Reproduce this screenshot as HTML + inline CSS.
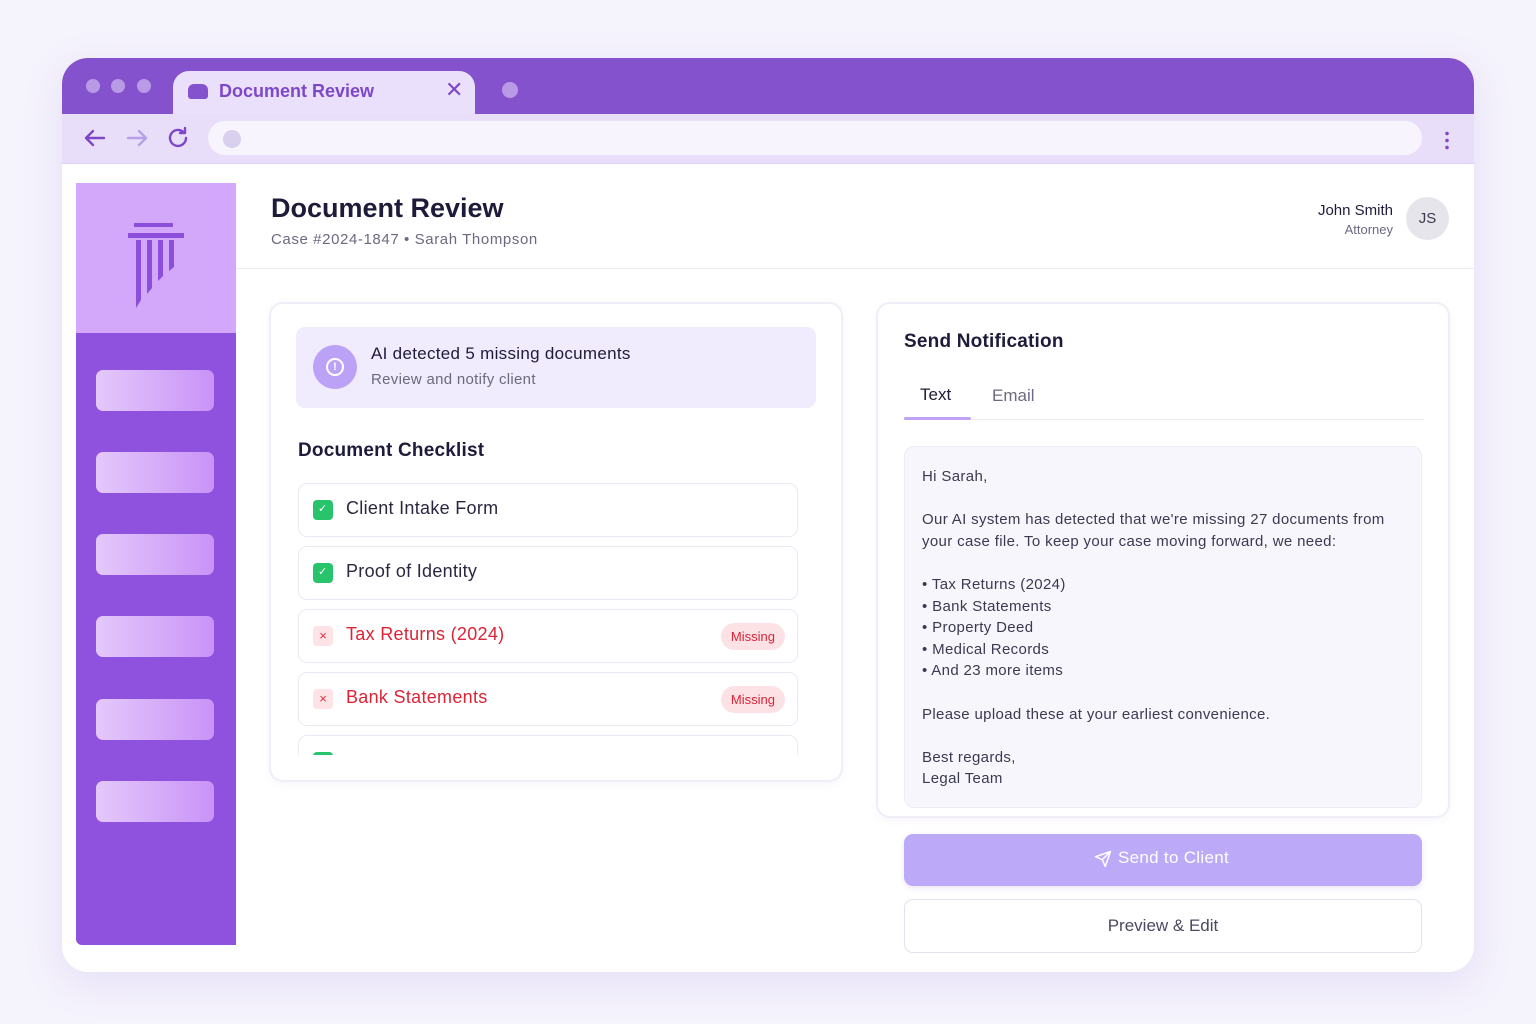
<!DOCTYPE html>
<html><head><meta charset="utf-8"><style>
*{box-sizing:border-box;margin:0;padding:0}
body{width:1536px;height:1024px;background:#f5f3fc;font-family:"Liberation Sans",sans-serif;position:relative;overflow:hidden;color:#1e1b3a}
.a{position:absolute}
.win{left:62px;top:58px;width:1412px;height:914px;border-radius:26px;background:#fff;overflow:hidden;box-shadow:0 10px 40px rgba(140,110,220,.15)}
.bar{left:0;top:0;width:1412px;height:56px;background:#8452cc}
.dot{width:14px;height:14px;border-radius:50%;background:#b99ae6}
.tab{left:111px;top:13px;width:302px;height:50px;background:#ebe0fb;border-radius:16px 16px 0 0}
.nav{left:0;top:56px;width:1412px;height:50px;background:#e9defa;border-bottom:1px solid #ddd0f5}
.url{left:146px;top:63px;width:1214px;height:34px;background:#f7f4fd;border-radius:17px}
.sb{left:14px;top:125px;width:160px;height:762px;background:#8e52df;border-radius:0 0 0 6px}
.sbt{left:0;top:0;width:160px;height:150px;background:#d3a8fa}
.sbb{left:20px;width:118px;height:41px;border-radius:7px;background:linear-gradient(90deg,#e4c8fb,#c993f7)}
.card{background:#fff;border:2px solid #f0edf8;border-radius:14px;box-shadow:0 2px 8px rgba(150,130,210,.08)}
.row{left:236px;width:500px;height:54px;border:1.5px solid #ebe8f3;border-radius:9px;background:#fff}
.ck{left:14px;top:16px;width:20px;height:20px;border-radius:4px;background:#27c46b}
.xk{left:14px;top:16px;width:20px;height:20px;border-radius:4px;background:#fde3e6;color:#e52d3d;font-size:13px;text-align:center;line-height:20px}
.rt{left:47px;top:14px;font-size:18px;color:#2a2840;letter-spacing:.3px}
.miss{right:12px;top:13px;padding:0 10px;height:27px;line-height:27px;border-radius:14px;background:#fde2e5;color:#dc2436;font-size:13px}
.msg{font-size:15px;color:#3b3a50;line-height:21.6px;letter-spacing:.35px}
</style></head><body>
<div class="a win">
 <div class="a bar"></div>
 <div class="a dot" style="left:24px;top:21px"></div><div class="a dot" style="left:49px;top:21px"></div><div class="a dot" style="left:75px;top:21px"></div>
 <div class="a dot" style="left:440px;top:24px;width:16px;height:16px"></div>
 <div class="a tab"></div>
 <div class="a" style="left:126px;top:26px;width:20px;height:15px;background:#8452cc;border-radius:6px 6px 3px 3px"></div>
 <div class="a" style="left:157px;top:23px;font-size:18px;font-weight:bold;color:#7d48c8">Document Review</div>
 <div class="a" style="left:383px;top:19px;font-size:22px;color:#7d48c8">✕</div>
 <div class="a nav"></div>
 <svg class="a" style="left:20px;top:67px" width="110" height="26" viewBox="0 0 110 26"><g fill="none" stroke-width="2.4" stroke-linecap="round" stroke-linejoin="round"><path d="M4 13h18M11 6l-7 7 7 7" stroke="#7d48c8"/><path d="M46 13h18M57 6l7 7-7 7" stroke="#b7a0e4"/><path d="M104 13a8 8 0 1 1-3-6.3M103 3v5h-5" stroke="#7d48c8"/></g></svg>
 <div class="a url"></div>
 <div class="a dot" style="left:161px;top:72px;width:18px;height:18px;background:#d8d0ec"></div>
 <div class="a" style="left:1383px;top:72px;width:4px;height:20px;background:radial-gradient(circle,#7d48c8 1.6px,transparent 2px) 0 0/4px 7px"></div>
 <div class="a sb"><div class="a sbt">
  <div class="a" style="left:58px;top:40px;width:39px;height:4px;background:#8c4fdc"></div>
  <div class="a" style="left:52px;top:50px;width:56px;height:5px;background:#8c4fdc"></div>
  <svg class="a" style="left:55px;top:57px" width="50" height="70"><path d="M5 0h5v60l-5 8zM16 0h5v48l-5 6zM27 0h5v36l-5 5zM38 0h5v27l-5 4z" fill="#8c4fdc"/></svg>
 </div>
  <div class="a sbb" style="top:187px"></div><div class="a sbb" style="top:269px"></div><div class="a sbb" style="top:351px"></div><div class="a sbb" style="top:433px"></div><div class="a sbb" style="top:516px"></div><div class="a sbb" style="top:598px"></div>
 </div>
 <div class="a" style="left:174px;top:210px;width:1238px;height:1px;background:#ece9f3"></div>
 <div class="a" style="left:209px;top:135px;font-size:27px;font-weight:bold;color:#1e1b3a">Document Review</div>
 <div class="a" style="left:209px;top:173px;font-size:15px;color:#6b6a80;letter-spacing:.6px">Case #2024-1847 • Sarah Thompson</div>
 <div class="a" style="left:1200px;top:144px;width:131px;text-align:right;font-size:15px;color:#1e1b3a">John Smith</div>
 <div class="a" style="left:1200px;top:164px;width:131px;text-align:right;font-size:13px;color:#6b6a80">Attorney</div>
 <div class="a" style="left:1344px;top:139px;width:43px;height:43px;border-radius:50%;background:#e6e5ec;text-align:center;line-height:43px;font-size:15px;color:#3b3a50">JS</div>

 <div class="a card" style="left:207px;top:244px;width:574px;height:480px"></div>
 <div class="a" style="left:234px;top:269px;width:520px;height:81px;background:#f0ebfd;border-radius:9px"></div>
 <div class="a" style="left:251px;top:287px;width:44px;height:44px;border-radius:50%;background:#bca2f6"></div>
 <div class="a" style="left:264px;top:300px;width:18px;height:18px;border:2px solid #fff;border-radius:50%;color:#fff;font-size:11px;font-weight:bold;text-align:center;line-height:14px">!</div>
 <div class="a" style="left:309px;top:286px;font-size:17px;color:#1e1b3a;letter-spacing:.3px">AI detected 5 missing documents</div>
 <div class="a" style="left:309px;top:313px;font-size:15px;color:#6b6a80;letter-spacing:.3px">Review and notify client</div>
 <div class="a" style="left:236px;top:382px;font-size:19px;font-weight:bold;color:#1e1b3a;letter-spacing:.2px">Document Checklist</div>
 <div class="a row" style="top:425px"><div class="a ck"></div><div class="a" style="left:19px;top:18px;color:#fff;font-size:11px">✓</div><div class="a rt">Client Intake Form</div></div>
 <div class="a row" style="top:488px"><div class="a ck"></div><div class="a" style="left:19px;top:18px;color:#fff;font-size:11px">✓</div><div class="a rt">Proof of Identity</div></div>
 <div class="a row" style="top:551px"><div class="a xk">×</div><div class="a rt" style="color:#dc2436">Tax Returns (2024)</div><div class="a miss">Missing</div></div>
 <div class="a row" style="top:614px"><div class="a xk">×</div><div class="a rt" style="color:#dc2436">Bank Statements</div><div class="a miss">Missing</div></div>
 <div class="a" style="left:236px;top:677px;width:500px;height:20px;overflow:hidden"><div class="a row" style="left:0;top:0"><div class="a ck"></div></div></div>

 <div class="a card" style="left:814px;top:244px;width:574px;height:516px"></div>
 <div class="a" style="left:842px;top:273px;font-size:19px;font-weight:bold;color:#1e1b3a;letter-spacing:.2px">Send Notification</div>
 <div class="a" style="left:858px;top:327px;font-size:17px;color:#1e1b3a">Text</div>
 <div class="a" style="left:930px;top:328px;font-size:17px;color:#6b6a80">Email</div>
 <div class="a" style="left:842px;top:361px;width:520px;height:1px;background:#ece9f3"></div>
 <div class="a" style="left:842px;top:359px;width:67px;height:3px;background:#c0a3f5;border-radius:2px"></div>
 <div class="a" style="left:842px;top:388px;width:518px;height:362px;background:#f7f6fc;border:1.5px solid #eeecf5;border-radius:10px"></div>
 <div class="a msg" style="left:860px;top:408px">Hi Sarah,<br><br>Our AI system has detected that we're missing 27 documents from<br>your case file. To keep your case moving forward, we need:<br><br>• Tax Returns (2024)<br>• Bank Statements<br>• Property Deed<br>• Medical Records<br>• And 23 more items<br><br>Please upload these at your earliest convenience.<br><br>Best regards,<br>Legal Team</div>

 <div class="a" style="left:842px;top:776px;width:518px;height:52px;background:#bcaaf9;border-radius:9px;box-shadow:0 2px 6px rgba(150,120,230,.2)"></div>
 <svg class="a" style="left:1032px;top:792px" width="18" height="18" viewBox="0 0 24 24"><path d="M22 2L11 13M22 2l-7 20-4-9-9-4z" fill="none" stroke="#fff" stroke-width="2" stroke-linejoin="round"/></svg>
 <div class="a" style="left:1056px;top:790px;font-size:17px;color:#fff;letter-spacing:.3px">Send to Client</div>
 <div class="a" style="left:842px;top:841px;width:518px;height:54px;background:#fff;border:1.5px solid #e4e1ef;border-radius:9px;text-align:center;line-height:51px;font-size:17px;color:#4a4960">Preview &amp; Edit</div>
</div>
</body></html>
